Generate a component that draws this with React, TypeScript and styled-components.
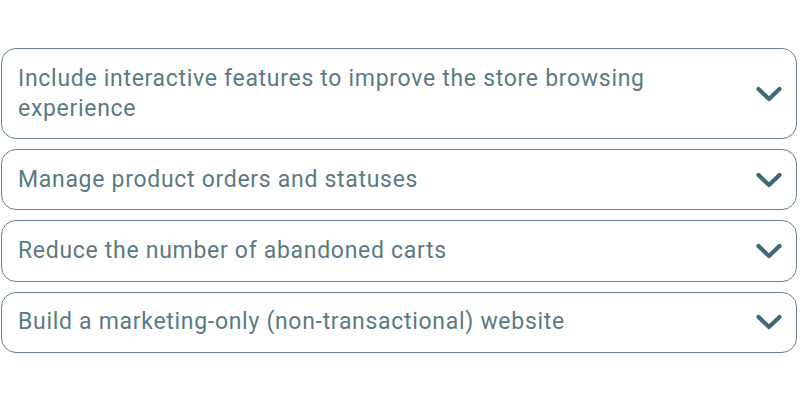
import styled, { createGlobalStyle } from 'styled-components';

const GlobalStyle = createGlobalStyle`
  html, body {
    margin: 0;
    padding: 0;
    background: #ffffff;
  }
  body {
    font-family: Roboto, "Liberation Sans", Arial, sans-serif;
  }
`;

const items: string[] = [
  'Include interactive features to improve the store browsing experience',
  'Manage product orders and statuses',
  'Reduce the number of abandoned carts',
  'Build a marketing-only (non-transactional) website',
];

function Chevron() {
  return (
    <svg width="28" height="18" viewBox="0 0 28 18" aria-hidden="true">
      <path
        d="M3.5 4 L14 14 L24.5 4"
        fill="none"
        stroke="#3f6878"
        strokeWidth="4.2"
        strokeLinecap="round"
        strokeLinejoin="round"
      />
    </svg>
  );
}

export default function App() {
  return (
    <>
      <GlobalStyle />
      <StyledList>
        {items.map((label, idx) => (
          <StyledItem key={idx}>
            <StyledLabel>{label}</StyledLabel>
            <StyledIcon>
              <Chevron />
            </StyledIcon>
          </StyledItem>
        ))}
      </StyledList>
    </>
  );
}

const StyledList = styled.div`
  display: flex;
  flex-direction: column;
  gap: 10px;
  width: 797px;
  padding: 48px 0 0 1px;
  box-sizing: border-box;
`;

const StyledItem = styled.div`
  display: flex;
  align-items: center;
  justify-content: space-between;
  border: 1.4px solid #64828b;
  border-radius: 15px;
  padding: 14.6px 13px 14.6px 16px;
  background-color: #ffffff;
`;

const StyledLabel = styled.div`
  flex: 1;
  font-size: 23px;
  line-height: 30px;
  letter-spacing: 0.7px;
  color: #5b7a83;
  padding-right: 60px;
`;

const StyledIcon = styled.div`
  display: flex;
  align-items: center;
  flex-shrink: 0;
`;
